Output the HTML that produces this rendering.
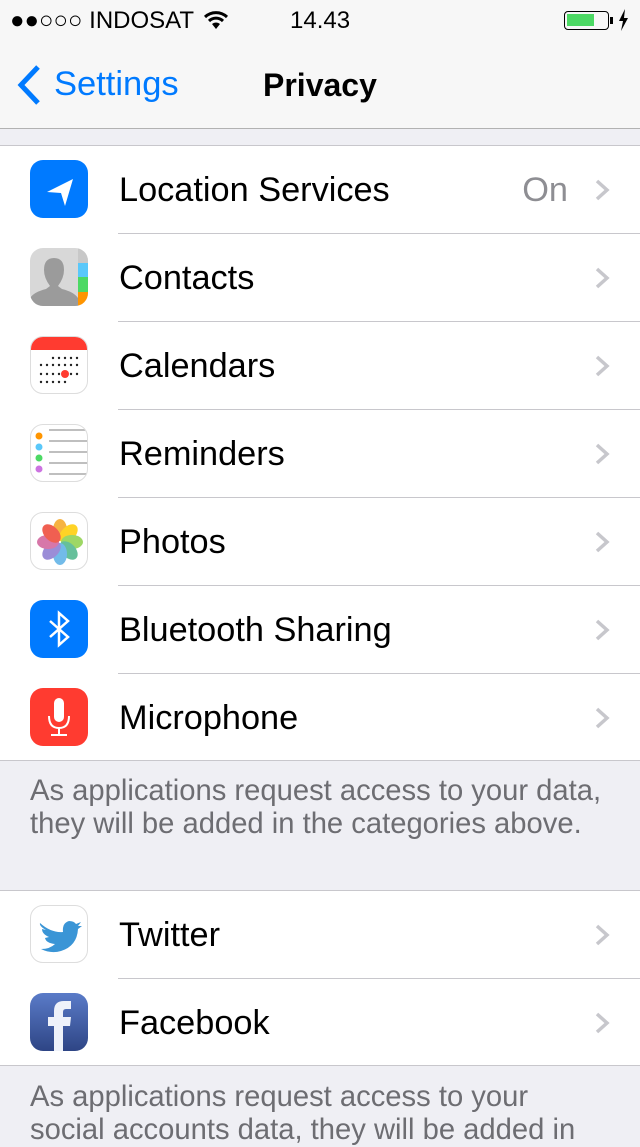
<!DOCTYPE html>
<html><head><meta charset="utf-8"><style>
*{margin:0;padding:0;box-sizing:border-box}
body{width:640px;height:1136px;overflow:hidden;background:#efeff4;font-family:"Liberation Sans",sans-serif;position:relative}
.abs{position:absolute}
.nav{left:0;top:0;width:640px;height:129px;background:#f7f7f7;border-bottom:1px solid #b2b2b2}
.group{position:absolute;left:0;width:640px;background:#fff;border-top:1px solid #c8c7cc;border-bottom:1px solid #c8c7cc}
.row{position:relative;height:88px}
.row.last{height:86px}
.row .sep{position:absolute;left:118px;right:0;bottom:0;height:1px;background:#c8c7cc}
.row .lbl{position:absolute;left:119px;top:0;line-height:88px;font-size:34.3px;color:#000}
.row .ic{position:absolute;left:30px;top:14px;width:58px;height:58px;border-radius:13px;overflow:hidden}
.chev{position:absolute;right:28px;top:33px;width:20px;height:22px}
.foot{position:absolute;left:30px;font-size:29.2px;color:#6d6d72;line-height:33px;white-space:nowrap}
</style></head><body>
<div class="abs nav"></div>
<div class="abs" style="left:10px;top:6px;font-size:24px;color:#000;line-height:30px">●●○○○ INDOSAT</div>
<svg class="abs" style="left:203px;top:10px" width="26" height="20" viewBox="0 0 26 20"><path d="M2 7 A16 16 0 0 1 24 7" stroke="#000" stroke-width="3" fill="none"/><path d="M6 11 A10 10 0 0 1 20 11" stroke="#000" stroke-width="3" fill="none"/><path d="M13 19 L9 14 A6 6 0 0 1 17 14 Z" fill="#000"/></svg>
<div class="abs" style="left:290px;top:6px;font-size:24px;line-height:30px;color:#000">14.43</div>
<div class="abs" style="left:564px;top:11px;width:45px;height:19px;border:1.5px solid #000;border-radius:4px"><div style="position:absolute;left:2px;top:2px;width:27px;height:12px;background:#4cd964"></div></div>
<div class="abs" style="left:610px;top:17px;width:3px;height:7px;background:#000"></div>
<svg class="abs" style="left:617px;top:9px" width="12" height="22" viewBox="0 0 12 22"><path d="M8 0 L2 12 H6 L4 22 L11 9 H7 Z" fill="#000"/></svg>
<svg class="abs" style="left:15px;top:64px" width="28" height="42" viewBox="0 0 28 42"><path d="M23 3 L6 21 L23 39" stroke="#007aff" stroke-width="5" fill="none"/></svg>
<div class="abs" style="left:54px;top:65px;font-size:34.5px;color:#007aff;line-height:38px">Settings</div>
<div class="abs" style="left:263px;top:66px;font-size:32px;font-weight:bold;color:#000;line-height:38px">Privacy</div>

<div class="group" style="top:145px">
<div class="row"><div class="ic" style="background:#007aff"><svg width="58" height="58"><path d="M17 32 L43 19 L35 46 L31 33 Z" fill="#fff"/></svg></div><div class="lbl">Location Services</div><div class="abs" style="right:72px;top:0;line-height:88px;font-size:34.3px;color:#8e8e93">On</div><svg class="chev" viewBox="0 0 20 22"><path d="M5 2 L15 11 L5 20" stroke="#c7c7cc" stroke-width="3.5" fill="none"/></svg><div class="sep"></div></div>
<div class="row"><div class="ic" style="background:#d8d8d8"><svg width="58" height="58"><path d="M0 58 L0 50 Q4 44 16 41 L20 38 Q14 30 14 22 Q14 10 24 10 Q34 10 34 22 Q34 30 28 38 L32 41 Q44 44 48 50 L48 58 Z" fill="#9b9b9b"/><rect x="48" y="0" width="10" height="15" fill="#c8c8c8"/><rect x="48" y="15" width="10" height="14" fill="#5ac8fa"/><rect x="48" y="29" width="10" height="15" fill="#4cd964"/><rect x="48" y="44" width="10" height="14" fill="#ff9500"/></svg></div><div class="lbl">Contacts</div><svg class="chev" viewBox="0 0 20 22"><path d="M5 2 L15 11 L5 20" stroke="#c7c7cc" stroke-width="3.5" fill="none"/></svg><div class="sep"></div></div>
<div class="row"><div class="ic" style="background:#fff;border:1px solid #ddd"><div style="height:13px;background:#ff3b30"></div><svg class="abs" style="left:0;top:0" width="58" height="58"><g fill="#222"><circle cx="22" cy="21" r="1.2"/><circle cx="28" cy="21" r="1.2"/><circle cx="34" cy="21" r="1.2"/><circle cx="40" cy="21" r="1.2"/><circle cx="46" cy="21" r="1.2"/><circle cx="10" cy="28" r="1.2"/><circle cx="16" cy="28" r="1.2"/><circle cx="22" cy="28" r="1.2"/><circle cx="28" cy="28" r="1.2"/><circle cx="34" cy="28" r="1.2"/><circle cx="40" cy="28" r="1.2"/><circle cx="46" cy="28" r="1.2"/><circle cx="10" cy="37" r="1.2"/><circle cx="16" cy="37" r="1.2"/><circle cx="22" cy="37" r="1.2"/><circle cx="28" cy="37" r="1.2"/><circle cx="40" cy="37" r="1.2"/><circle cx="46" cy="37" r="1.2"/><circle cx="10" cy="45" r="1.2"/><circle cx="16" cy="45" r="1.2"/><circle cx="22" cy="45" r="1.2"/><circle cx="28" cy="45" r="1.2"/><circle cx="34" cy="45" r="1.2"/></g><circle cx="34" cy="37" r="4" fill="#ff3b30"/></svg></div><div class="lbl">Calendars</div><svg class="chev" viewBox="0 0 20 22"><path d="M5 2 L15 11 L5 20" stroke="#c7c7cc" stroke-width="3.5" fill="none"/></svg><div class="sep"></div></div>
<div class="row"><div class="ic" style="background:#fff;border:1px solid #ddd"><svg width="58" height="58"><g stroke="#aaa" stroke-width="1.5"><line x1="18" y1="5" x2="58" y2="5"/><line x1="18" y1="16" x2="58" y2="16"/><line x1="18" y1="27" x2="58" y2="27"/><line x1="18" y1="38" x2="58" y2="38"/><line x1="18" y1="49" x2="58" y2="49"/></g><circle cx="8" cy="11" r="3.5" fill="#ff9500"/><circle cx="8" cy="22" r="3.5" fill="#5ac8fa"/><circle cx="8" cy="33" r="3.5" fill="#4cd964"/><circle cx="8" cy="44" r="3.5" fill="#cc73e1"/></svg></div><div class="lbl">Reminders</div><svg class="chev" viewBox="0 0 20 22"><path d="M5 2 L15 11 L5 20" stroke="#c7c7cc" stroke-width="3.5" fill="none"/></svg><div class="sep"></div></div>
<div class="row"><div class="ic" style="background:#fff;border:1px solid #ddd"><svg width="58" height="58" viewBox="0 0 58 58"><g opacity="0.85" transform="translate(29 29)"><ellipse cx="0" cy="-12" rx="7" ry="11" fill="#f5a623"/><ellipse cx="0" cy="-12" rx="7" ry="11" fill="#ffcc00" transform="rotate(45)"/><ellipse cx="0" cy="-12" rx="7" ry="11" fill="#8ed04a" transform="rotate(90)"/><ellipse cx="0" cy="-12" rx="7" ry="11" fill="#4cb58a" transform="rotate(135)"/><ellipse cx="0" cy="-12" rx="7" ry="11" fill="#5ab0e6" transform="rotate(180)"/><ellipse cx="0" cy="-12" rx="7" ry="11" fill="#8a7ad0" transform="rotate(225)"/><ellipse cx="0" cy="-12" rx="7" ry="11" fill="#d0609a" transform="rotate(270)"/><ellipse cx="0" cy="-12" rx="7" ry="11" fill="#ee4433" transform="rotate(315)"/></g></svg></div><div class="lbl">Photos</div><svg class="chev" viewBox="0 0 20 22"><path d="M5 2 L15 11 L5 20" stroke="#c7c7cc" stroke-width="3.5" fill="none"/></svg><div class="sep"></div></div>
<div class="row"><div class="ic" style="background:#007aff"><svg width="58" height="58"><path d="M20 21 L38 37 L29 45 L29 13 L38 21 L20 37" stroke="#fff" stroke-width="2.5" fill="none"/></svg></div><div class="lbl">Bluetooth Sharing</div><svg class="chev" viewBox="0 0 20 22"><path d="M5 2 L15 11 L5 20" stroke="#c7c7cc" stroke-width="3.5" fill="none"/></svg><div class="sep"></div></div>
<div class="row last"><div class="ic" style="background:#ff3b30"><svg width="58" height="58"><rect x="24" y="10" width="10" height="24" rx="5" fill="#fff"/><path d="M19 28 Q19 40 29 40 Q39 40 39 28" stroke="#fff" stroke-width="2" fill="none"/><line x1="29" y1="40" x2="29" y2="46" stroke="#fff" stroke-width="2"/><line x1="21" y1="47" x2="37" y2="47" stroke="#fff" stroke-width="2"/></svg></div><div class="lbl">Microphone</div><svg class="chev" viewBox="0 0 20 22"><path d="M5 2 L15 11 L5 20" stroke="#c7c7cc" stroke-width="3.5" fill="none"/></svg></div>
</div>
<div class="foot" style="top:775px">As applications request access to your data,<br>they will be added in the categories above.</div>

<div class="group" style="top:890px">
<div class="row"><div class="ic" style="background:#fff;border:1px solid #ddd"><svg width="58" height="58"><path d="M9 17 Q20 27 32 26 Q31 17 38 15 Q43 15 45 18 L50 16 L47 20 L51 20 L47 23 Q46 40 30 45 Q20 48 10 43 Q19 43 24 38 Q15 37 14 32 L18 31 Q11 28 11 23 L15 24 Q8 20 9 17 Z" fill="#3a95d6"/></svg></div><div class="lbl">Twitter</div><svg class="chev" viewBox="0 0 20 22"><path d="M5 2 L15 11 L5 20" stroke="#c7c7cc" stroke-width="3.5" fill="none"/></svg><div class="sep"></div></div>
<div class="row last"><div class="ic" style="background:linear-gradient(#5a7bc8,#2e4585)"><svg width="58" height="58"><path d="M24 58 L24 33 L18 33 L18 24 L24 24 L24 18 Q24 8 34 8 L41 8 L41 16 L36 16 Q33 16 33 19 L33 24 L41 24 L40 33 L33 33 L33 58 Z" fill="#eef2fa"/></svg></div><div class="lbl">Facebook</div><svg class="chev" viewBox="0 0 20 22"><path d="M5 2 L15 11 L5 20" stroke="#c7c7cc" stroke-width="3.5" fill="none"/></svg></div>
</div>
<div class="foot" style="top:1081px">As applications request access to your<br>social accounts data, they will be added in</div>
</body></html>
